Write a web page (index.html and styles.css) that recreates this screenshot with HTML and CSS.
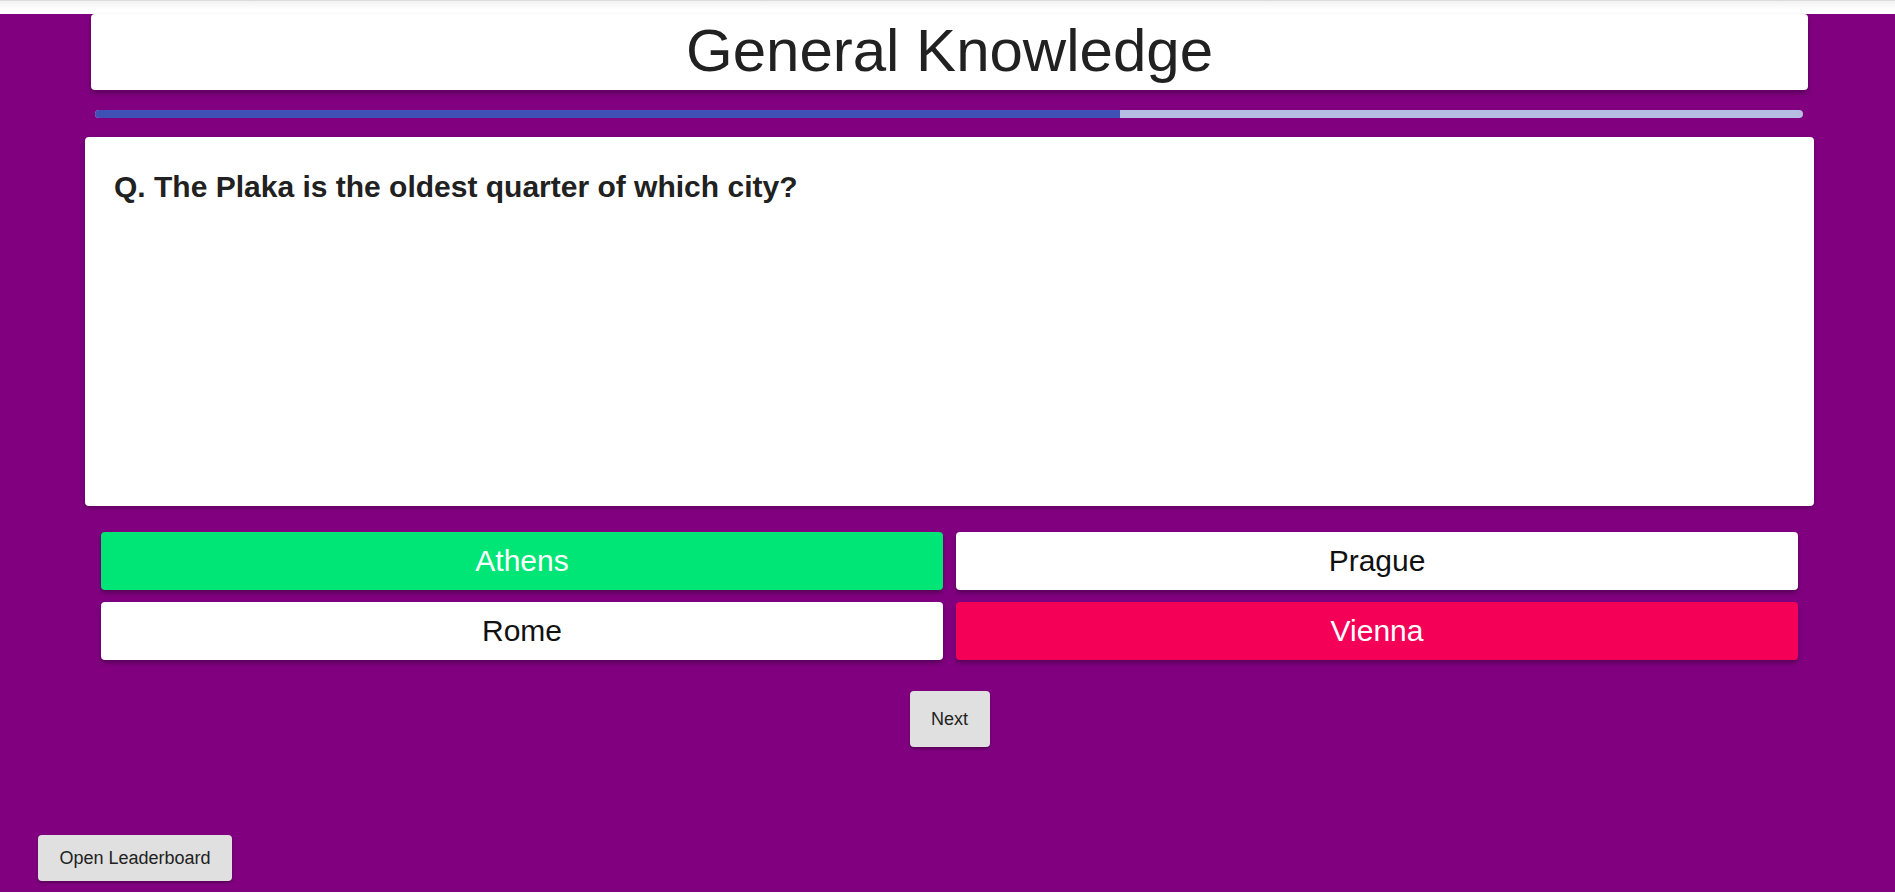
FILE: index.html
```html
<!DOCTYPE html>
<html lang="en">
<head>
<meta charset="utf-8">
<title>General Knowledge</title>
<link rel="stylesheet" href="styles.css">
</head>
<body>
<div class="topstrip"></div>
<main class="stage">
  <div class="quiz">
    <header class="title-card">
      <h1 class="title">General Knowledge</h1>
    </header>
    <div class="progress"><div class="progress-fill" style="width: 60%"></div></div>
    <section class="question-card">
      <h2 class="question">Q. The Plaka is the oldest quarter of which city?</h2>
    </section>
    <div class="answers">
      <button class="answer correct">Athens</button>
      <button class="answer">Prague</button>
      <button class="answer">Rome</button>
      <button class="answer wrong">Vienna</button>
    </div>
    <div class="next-row">
      <button class="btn btn-next">Next</button>
    </div>
  </div>
  <div class="footer-row">
    <button class="btn btn-leader">Open Leaderboard</button>
  </div>
</main>
</body>
</html>
```

FILE: styles.css
```css
* { box-sizing: border-box; }

html, body {
  margin: 0;
  padding: 0;
  background: #ffffff;
  font-family: "Liberation Sans", Arial, sans-serif;
}

.topstrip {
  height: 14px;
  border-top: 1px solid #dcdcdc;
  background: linear-gradient(#f2f2f2, #ffffff 70%);
}

.stage {
  background: #800080;
  min-height: 878px;
  display: flex;
  flex-direction: column;
}

.quiz {
  width: 1729px;
  margin-left: 85px;
  display: flex;
  flex-direction: column;
}

.title-card {
  margin: 0 6px;
  height: 76px;
  padding-top: 4px;
  background: #ffffff;
  border-radius: 4px;
  box-shadow: 0 3px 5px rgba(0, 0, 0, 0.3);
}

.title {
  margin: 0;
  font-size: 60px;
  font-weight: 400;
  line-height: 66px;
  text-align: center;
  color: #212121;
}

.progress {
  margin: 20px 11px 0 10px;
  height: 8px;
  border-radius: 4px;
  background: #b6bce2;
  overflow: hidden;
}

.progress-fill {
  height: 100%;
  background: #3f51b5;
  border-radius: 4px 0 0 4px;
}

.question-card {
  margin-top: 19px;
  height: 369px;
  background: #ffffff;
  border-radius: 4px;
  padding: 33px 29px 29px;
  box-shadow: 0 2px 4px rgba(0, 0, 0, 0.25);
}

.question {
  margin: 0;
  font-size: 30px;
  font-weight: 700;
  color: #212121;
  line-height: 34px;
}

.answers {
  margin-top: 26px;
  padding: 0 16px;
  display: grid;
  grid-template-columns: 1fr 1fr;
  column-gap: 13px;
  row-gap: 12px;
}

.answer {
  height: 58px;
  border: none;
  border-radius: 4px;
  background: #ffffff;
  color: #111111;
  font-family: "Liberation Sans", Arial, sans-serif;
  font-size: 30px;
  line-height: 58px;
  padding: 0;
  text-align: center;
  box-shadow: 0 3px 4px rgba(0, 0, 0, 0.3);
}

.answer.correct {
  background: #00e676;
  color: #ffffff;
}

.answer.wrong {
  background: #f50057;
  color: #ffffff;
}

.next-row {
  margin-top: 31px;
  display: flex;
  justify-content: center;
}

.btn {
  border: none;
  border-radius: 4px;
  background: #e0e0e0;
  color: #222222;
  font-family: "Liberation Sans", Arial, sans-serif;
  font-size: 18px;
  box-shadow: 0 2px 3px rgba(0, 0, 0, 0.3);
}

.btn-next {
  width: 80px;
  height: 56px;
  padding: 0;
}

.footer-row {
  margin-top: auto;
  padding: 0 0 11px 38px;
}

.btn-leader {
  width: 194px;
  height: 46px;
  padding: 0;
}
```
